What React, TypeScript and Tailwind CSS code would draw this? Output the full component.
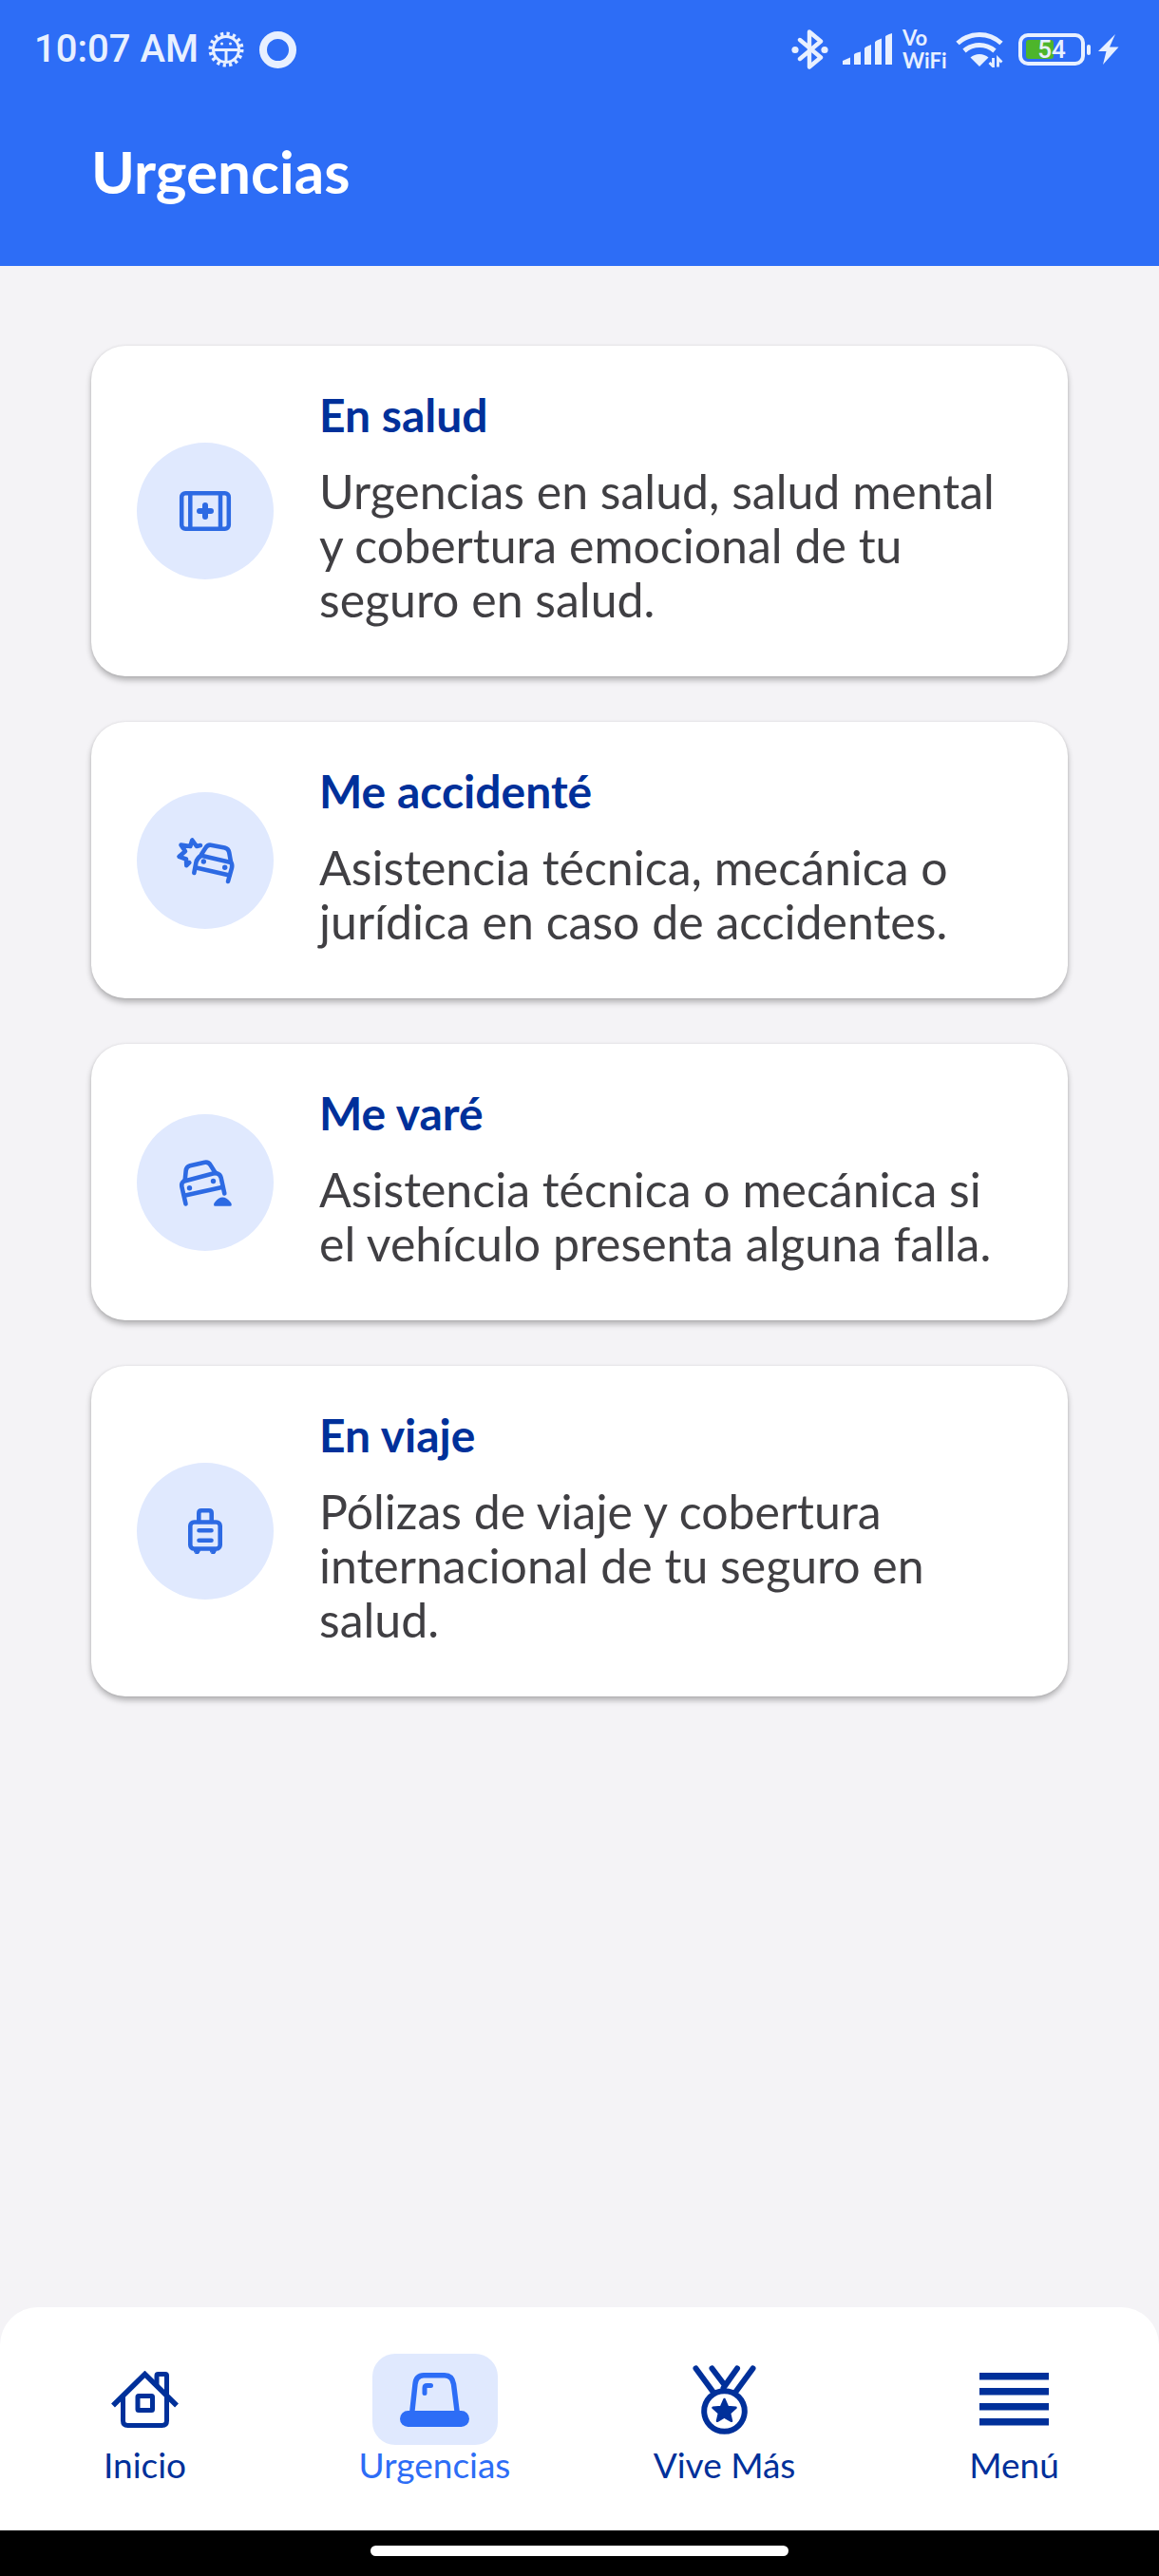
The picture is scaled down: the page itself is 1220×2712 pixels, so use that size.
import type { ReactNode } from 'react';
import clsx from 'clsx';

const KitIcon = () => (
  <svg viewBox="0 0 72 72" className="size-[72px]" fill="none" stroke="currentColor" strokeWidth="4.5" aria-hidden="true">
    <rect x="11.2" y="17.2" width="49.6" height="37.6" rx="4" />
    <path d="M20.3 17v38M52 17v38" />
    <path d="M36 30v12M30 36h12" strokeWidth="6" strokeLinecap="round" />
  </svg>
);

const CrashIcon = () => (
  <svg viewBox="0 0 72 72" className="size-[72px]" fill="none" stroke="currentColor" strokeWidth="4.6" strokeLinecap="round" strokeLinejoin="round" aria-hidden="true">
    <path d="M31 20l-4 1-4.7-6.500-2 6.500-9.800-1.500 4.500 6.800-6.500 5.500 7.500 2.700.3 6.700 3-3" />
    <path d="M32 29.500l4.500-7q2-3.300 5.500-2.800l14.500 2.800q4 1 4.700 4.800l1.800 10" />
    <path d="M33 31l30 7" />
    <path d="M32 30.500q-4.500 3-5.500 7L24.300 49" />
    <path d="M63 37.700q1.800 2.300 1 6L60 58" />
    <path d="M26.500 43.500L61.500 51.500" />
    <circle cx="34.300" cy="37" r="2.700" fill="currentColor" stroke="none" />
    <circle cx="56.700" cy="43.200" r="2.700" fill="currentColor" stroke="none" />
  </svg>
);

const BreakdownIcon = () => (
  <svg viewBox="0 0 72 72" className="size-[72px]" fill="none" stroke="currentColor" strokeWidth="4.6" strokeLinecap="round" strokeLinejoin="round" aria-hidden="true">
    <path d="M14.700 33.500l1-10q.5-4.200 4.300-5.200l15.500-3.500q4-.7 6 2.700l5.300 8.500" />
    <path d="M15 34.300L47 25.800" />
    <path d="M14 34q-3.500 2.500-2.700 6L15.500 58.500" />
    <path d="M47.500 26q4.300 1 5.200 5L56.300 47.500" />
    <path d="M15 49.500L53.500 41" />
    <circle cx="19.500" cy="41.700" r="2.700" fill="currentColor" stroke="none" />
    <circle cx="44.500" cy="34.500" r="2.700" fill="currentColor" stroke="none" />
    <path d="M45 59.200q0-1.500 1.500-3Q50 51.500 54.300 51.500t8 4.700q1.500 1.500 1.500 3 0 1.500-1.500 1.500H46.500Q45 60.700 45 59.200z" fill="currentColor" stroke="none" />
  </svg>
);

const LuggageIcon = () => (
  <svg viewBox="0 0 72 72" className="size-[72px]" fill="none" stroke="currentColor" strokeWidth="4.600" strokeLinecap="round" aria-hidden="true">
    <rect x="20.300" y="26.500" width="31.400" height="28" rx="4" />
    <path d="M29.300 26V17q0-2.700 2.700-2.700h8q2.700 0 2.700 2.700v9M29.500 35.200h13M29.500 45.700h13" />
    <path d="M24.500 56.500h6l-1.500 3h-3zM41.500 56.500h6l-1.500 3h-3z" fill="currentColor" strokeWidth="1" />
  </svg>
);

const HomeIcon = () => (
  <svg viewBox="0 0 73 60" className="h-[60px] w-[73px]" fill="none" stroke="currentColor" strokeWidth="5" aria-hidden="true">
    <path d="M3 36.500L36.500 3.500 70 36.500" strokeWidth="5.500" />
    <path d="M13.500 27v25.500q0 5 5 5h36q5 0 5-5V5q0-1.500-1.500-1.500h-7.500Q49 3.500 49 5v10" />
    <rect x="29" y="26.500" width="15.500" height="15" rx="1" />
  </svg>
);

const SirenIcon = () => (
  <svg viewBox="0 0 73 57" className="h-[57px] w-[73px]" fill="none" stroke="currentColor" strokeWidth="5.500" aria-hidden="true">
    <path d="M12.500 44L16 12Q17 2.800 25 2.800h22q8 0 9.500 9.200L60.500 44" />
    <path d="M26 21.500V16q0-2.500 2.500-2.500H32.500" strokeWidth="5" strokeLinecap="round" />
    <rect y="40" width="73" height="17" rx="8.500" fill="currentColor" stroke="none" />
  </svg>
);

const MedalIcon = () => (
  <svg viewBox="0 0 67 73" className="h-[73px] w-[67px]" fill="none" stroke="currentColor" strokeWidth="6" strokeLinecap="round" aria-hidden="true">
    <path d="M3.500 3.500L21.500 28M63.500 3.500L45.500 28M20.500 3.500L33 20M47 3.500L32.500 24" />
    <circle cx="33.500" cy="48.500" r="21.300" />
    <path
      d="M33.500 36l3.500 8 8.500.8-6.400 5.700 1.900 8.300-7.500-4.300-7.500 4.300 1.900-8.300-6.400-5.700 8.500-.8z"
      fill="currentColor"
      strokeWidth="2.500"
      strokeLinejoin="round"
    />
  </svg>
);

const MenuIcon = () => (
  <svg viewBox="0 0 73 56" className="h-[56px] w-[73px]" fill="currentColor" aria-hidden="true">
    <path d="M0 0h73v7.500H0zM0 16h73v7.500H0zM0 32h73v7.500H0zM0 48h73v7.500H0z" />
  </svg>
);

const StatusBar = () => (
  <div className="flex h-[104px] items-center justify-between pr-[42px] pl-9 text-[#e8f0ff]">
    <div className="flex items-center">
      <span className="font-['Roboto',sans-serif] text-[40px] leading-[48px] font-medium">10:07 AM</span>
      <svg viewBox="0 0 38 38" className="ml-2.5 size-[38px]" fill="none" stroke="currentColor" aria-hidden="true">
        <circle cx="19" cy="19" r="16.500" strokeWidth="4" strokeDasharray="3.200 3.280" strokeLinecap="butt" />
        <circle cx="19" cy="19" r="13.500" strokeWidth="3" />
        <path d="M5 19.500h28M19 20v13" strokeWidth="3" />
        <circle cx="14.500" cy="13" r="1.500" fill="currentColor" stroke="none" />
        <circle cx="23.500" cy="13" r="1.500" fill="currentColor" stroke="none" />
      </svg>
      <span className="ml-4 size-[39px] rounded-full border-8 border-current" />
    </div>

    <div className="flex items-center">
      <svg viewBox="0 0 40 42" className="h-[42px] w-10" fill="none" stroke="currentColor" strokeWidth="4.400" strokeLinecap="round" strokeLinejoin="round" aria-hidden="true">
        <path d="M9 11l22 18.500L19 39.500V2.500l12 10L9 31" />
        <circle cx="4" cy="21.500" r="3.600" fill="currentColor" stroke="none" />
        <circle cx="35" cy="21.500" r="3.600" fill="currentColor" stroke="none" />
      </svg>
      <svg viewBox="0 0 53 34" className="ml-3.5 h-[34px] w-[53px]" fill="currentColor" aria-hidden="true">
        <path d="M0 29l8-3.500V33H0zM12 22.500q0-1.500 7-3V33h-7zM23 16q0-1.500 7-4V33h-7zM34 9.500q0-1.500 7-4V33h-7zM45 3.500q0-1.500 7-3.500V33h-7z" />
      </svg>
      <span className="ml-2.5 flex w-[46px] flex-col font-['Lato',sans-serif] text-[22px] leading-[24px] font-bold">
        <span>Vo</span>
        <span>WiFi</span>
      </span>
      <svg viewBox="0 0 50 38" className="ml-2.5 h-[38px] w-[50px]" fill="none" stroke="currentColor" strokeWidth="5" aria-hidden="true">
        <path d="M2 12.500Q12 3.500 25 3.500t23 9M9 20.500q7-6 16-6t16 6" />
        <path d="M15.500 27.500q4-3.500 9.500-3.500t9.500 3.500L25 37z" fill="currentColor" stroke="none" />
        <path d="M39.500 28v9l-4-4M44.500 37.500V28.500l4 4" strokeWidth="2.800" />
      </svg>
      <span className="ml-4 flex items-center gap-0.5">
        <span className="relative flex h-[34px] w-[70px] items-center justify-center rounded-[10px] border-4 border-current">
          <span className="absolute inset-y-[3px] left-1 w-[46%] rounded-[3px] bg-[#4db52b]" />
          <span className="relative font-['Roboto',sans-serif] text-[26px] leading-[26px] font-medium">54</span>
        </span>
        <span className="h-[11px] w-1 rounded-sm bg-current" />
      </span>
      <svg viewBox="0 0 22 32" className="ml-2 h-8 w-[22px]" fill="currentColor" aria-hidden="true">
        <path d="M18 0L0 18h8.500L5 32 21.500 13.500H12z" />
      </svg>
    </div>
  </div>
);

const cards = [
  {
    title: 'En salud',
    text: 'Urgencias en salud, salud mental y cobertura emocional de tu seguro en salud.',
    icon: <KitIcon />,
  },
  {
    title: 'Me accidenté',
    text: 'Asistencia técnica, mecánica o jurídica en caso de accidentes.',
    icon: <CrashIcon />,
  },
  {
    title: 'Me varé',
    text: 'Asistencia técnica o mecánica si el vehículo presenta alguna falla.',
    icon: <BreakdownIcon />,
  },
  {
    title: 'En viaje',
    text: 'Pólizas de viaje y cobertura internacional de tu seguro en salud.',
    icon: <LuggageIcon />,
  },
];

const tabs = [
  { label: 'Inicio', icon: <HomeIcon /> },
  { label: 'Urgencias', icon: <SirenIcon />, active: true },
  { label: 'Vive Más', icon: <MedalIcon /> },
  { label: 'Menú', icon: <MenuIcon /> },
];

const UrgencyCard = ({ title, text, icon }: { title: string; text: string; icon: ReactNode }) => (
  <button
    type="button"
    className="flex w-full items-center gap-12 rounded-[36px] bg-white px-12 text-left shadow-[0_4px_6px_rgba(0,0,0,0.28),0_0_3px_rgba(0,0,0,0.08)]"
  >
    <span className="flex size-36 shrink-0 items-center justify-center rounded-full bg-[#e0e9fe] text-[#2d6ae3]">
      {icon}
    </span>
    <span className="flex flex-1 flex-col gap-6 pt-11 pb-13">
      <span className="text-[48px] leading-[57px] font-bold text-[#00309a]">{title}</span>
      <span className="text-[50px] leading-[57px] text-[#403f43]">{text}</span>
    </span>
  </button>
);

const App = () => {
  return (
    <div className="flex min-h-screen flex-col bg-[#f4f3f6] font-['Lato',sans-serif]">
      <header className="bg-[#2d6df6]">
        <StatusBar />
        <div className="flex h-44 items-start px-24 pt-10">
          <h1 className="text-[62px] leading-[72px] font-bold text-white">Urgencias</h1>
        </div>
      </header>

      <main className="flex flex-1 flex-col gap-12 px-24 py-[84px]">
        {cards.map((card) => (
          <UrgencyCard key={card.title} {...card} />
        ))}
      </main>

      <nav className="grid grid-cols-4 rounded-t-[40px] bg-white pt-[49px] pb-12">
        {tabs.map((tab) => (
          <a
            key={tab.label}
            href="#"
            aria-current={tab.active ? 'page' : undefined}
            className={clsx('flex flex-col items-center', tab.active ? 'text-[#2d6df6]' : 'text-[#00309a]')}
          >
            <span className={clsx('flex h-24 w-[132px] items-center justify-center rounded-3xl', tab.active && 'bg-[#e0e9fe]')}>
              {tab.icon}
            </span>
            <span className="text-[37px] leading-[42px]">{tab.label}</span>
          </a>
        ))}
      </nav>

      <div className="flex h-12 items-start justify-center bg-black pt-4">
        <span className="h-[11px] w-[36%] rounded-full bg-white" />
      </div>
    </div>
  );
};

export default App;
